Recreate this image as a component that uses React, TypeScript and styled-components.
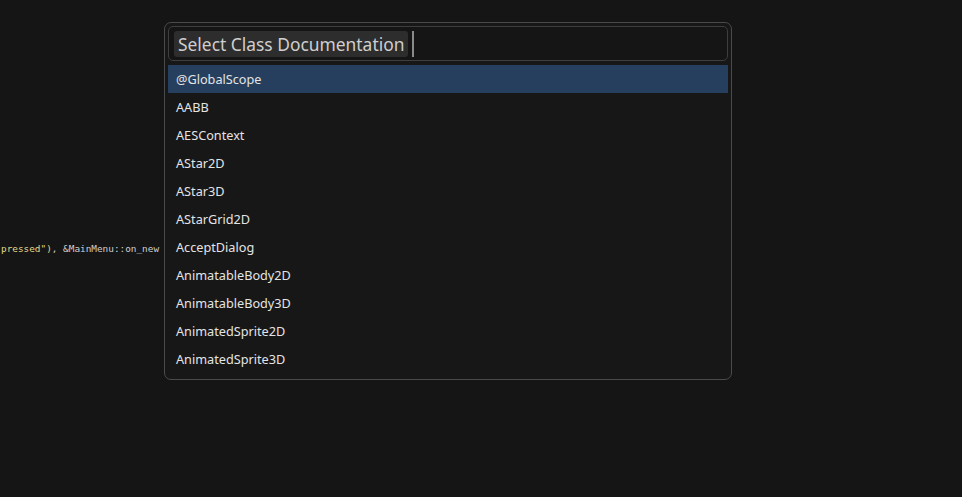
import React from "react";
import styled, { createGlobalStyle } from "styled-components";

const Global = createGlobalStyle`
  html, body { margin: 0; padding: 0; background: #151515; }
  body { width: 962px; height: 497px; overflow: hidden; font-family: "Noto Sans", sans-serif; }
`;

const Page = styled.div`
  position: relative;
  width: 962px;
  height: 497px;
  background: #151515;
  overflow: hidden;
`;

const CodeArea = styled.div`
  padding-top: 241px;
  padding-left: 1px;
  font-family: "DejaVu Sans Mono", monospace;
  font-size: 9.4px;
  line-height: 16px;
  color: #cdcfd2;
  white-space: pre;
`;

const Str = styled.span`
  color: #e2d88a;
`;

const Popup = styled.div`
  position: absolute;
  left: 164px;
  top: 22px;
  width: 560px;
  height: 350px;
  padding: 3px;
  border: 1px solid #4a4a4a;
  border-radius: 7px;
  background: #171717;
  display: flex;
  flex-direction: column;
  gap: 4px;
`;

const SearchBox = styled.div`
  height: 33px;
  border: 1px solid #3e3e3e;
  border-radius: 5px;
  background: #151515;
  display: flex;
  align-items: center;
  padding: 0 5px;
  gap: 4px;
`;

const Placeholder = styled.span`
  background: #2d2d2d;
  border-radius: 3px;
  color: #cfcfcf;
  font-size: 17.4px;
  line-height: 26px;
  padding: 0 4px;
`;

const Caret = styled.span`
  width: 2px;
  height: 26px;
  background: #8a8a8a;
`;

const List = styled.div`
  display: flex;
  flex-direction: column;
`;

const Row = styled.div<{ $selected?: boolean }>`
  height: 28px;
  display: flex;
  align-items: center;
  padding-left: 8px;
  font-size: 12.7px;
  color: #e4e4e4;
  background: ${(p) => (p.$selected ? "#263f5e" : "transparent")};
`;

const items = [
  "@GlobalScope",
  "AABB",
  "AESContext",
  "AStar2D",
  "AStar3D",
  "AStarGrid2D",
  "AcceptDialog",
  "AnimatableBody2D",
  "AnimatableBody3D",
  "AnimatedSprite2D",
  "AnimatedSprite3D",
];

export default function App() {
  return (
    <Page>
      <Global />
      <CodeArea>
        <Str>pressed")</Str>, &amp;MainMenu::on_new
      </CodeArea>
      <Popup>
        <SearchBox>
          <Placeholder>Select Class Documentation</Placeholder>
          <Caret />
        </SearchBox>
        <List>
          {items.map((it, i) => (
            <Row key={it} $selected={i === 0}>
              {it}
            </Row>
          ))}
        </List>
      </Popup>
    </Page>
  );
}
